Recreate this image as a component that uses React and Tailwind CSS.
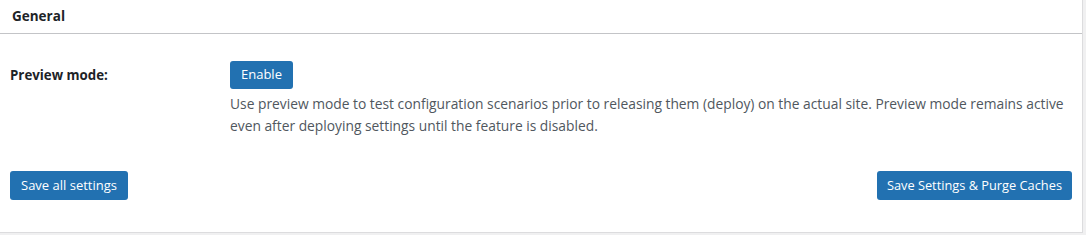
export default function App() {
  return (
    <div className="h-[235px] bg-[#f0f0f1] font-['Open_Sans',sans-serif] text-[13px] text-[#1d2327]">
      <div className="w-[1083px] h-[233px] bg-white border-r border-b border-[#dcdcde] flex flex-col">
        <div className="h-[34px] border-b border-[#c3c4c7] px-3 flex items-center">
          <h2 className="font-bold text-[13.5px] leading-none">General</h2>
        </div>
        <div className="flex pt-[27px] px-[10px]">
          <div className="w-[220px] pt-[5px] font-bold text-[13.3px]">Preview mode:</div>
          <div>
            <button className="h-[28px] px-[11px] rounded-[3px] bg-[#2271b1] text-white text-[13px]">Enable</button>
            <p className="mt-[4px] leading-[22px] text-[13.8px] text-[#50575e]">
              Use preview mode to test configuration scenarios prior to releasing them (deploy) on the actual site. Preview mode remains active
              <br />
              even after deploying settings until the feature is disabled.
            </p>
          </div>
        </div>
        <div className="flex justify-between px-[10px] mt-[34px]">
          <button className="h-[29px] px-[11px] rounded-[3px] bg-[#2271b1] text-white text-[13px]">Save all settings</button>
          <button className="h-[29px] px-[10px] rounded-[3px] bg-[#2271b1] text-white text-[12.8px]">Save Settings &amp; Purge Caches</button>
        </div>
      </div>
    </div>
  )
}
